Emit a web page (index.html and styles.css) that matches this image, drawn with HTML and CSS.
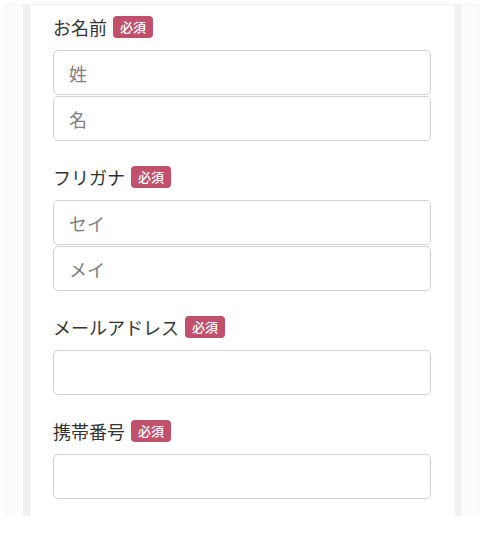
FILE: index.html
```html
<!DOCTYPE html>
<html lang="ja">
<head>
<meta charset="utf-8">
<link rel="stylesheet" href="styles.css">
</head>
<body>
<div class="page">
  <form class="card">
    <div class="group">
      <label class="label">お名前<span class="badge">必須</span></label>
      <input class="field" type="text" placeholder="姓">
      <input class="field stacked" type="text" placeholder="名">
    </div>
    <div class="group">
      <label class="label">フリガナ<span class="badge">必須</span></label>
      <input class="field" type="text" placeholder="セイ">
      <input class="field stacked" type="text" placeholder="メイ">
    </div>
    <div class="group">
      <label class="label">メールアドレス<span class="badge">必須</span></label>
      <input class="field" type="email">
    </div>
    <div class="group last">
      <label class="label">携帯番号<span class="badge">必須</span></label>
      <input class="field" type="tel">
    </div>
  </form>
</div>
</body>
</html>
```

FILE: styles.css
```css
html, body {
  margin: 0;
  padding: 0;
  background: #ffffff;
}
body {
  font-family: "Noto Sans CJK JP", "Noto Sans", sans-serif;
  color: #333333;
}
.page {
  margin: 4px 21px 0 5px;
  padding: 0 17px;
  background: #fcfcfc;
  border: 1px solid #f4f4f4;
  border-bottom: none;
}
.card {
  display: flex;
  flex-direction: column;
  background: #ffffff;
  border-left: 6px solid #eff1f1;
  border-right: 6px solid #f0f2f2;
  box-shadow: inset 1px 0 0 #e8eaea;
  padding: 10px 24px 17px;
}
.group {
  display: flex;
  flex-direction: column;
  margin-bottom: 24px;
}
.group.last {
  margin-bottom: 0;
}
.label {
  display: flex;
  align-items: center;
  font-size: 18px;
  line-height: 24px;
  height: 24px;
  margin-bottom: 11px;
  color: #333333;
}
.badge {
  display: inline-block;
  margin-left: 6px;
  padding: 0 7px;
  height: 22px;
  line-height: 22px;
  font-size: 13px;
  font-weight: 500;
  color: #ffffff;
  background: #c0506b;
  border-radius: 4px;
}
.field {
  box-sizing: border-box;
  display: block;
  width: 100%;
  height: 45px;
  margin: 0;
  padding: 0 15px;
  border: 1px solid #d2d4d4;
  border-radius: 5px;
  background: #ffffff;
  font-family: "Noto Sans CJK JP", "Noto Sans", sans-serif;
  font-size: 18px;
  color: #333333;
  outline: none;
}
.field.stacked {
  margin-top: 1px;
}
.field::placeholder {
  color: #808080;
}
```
